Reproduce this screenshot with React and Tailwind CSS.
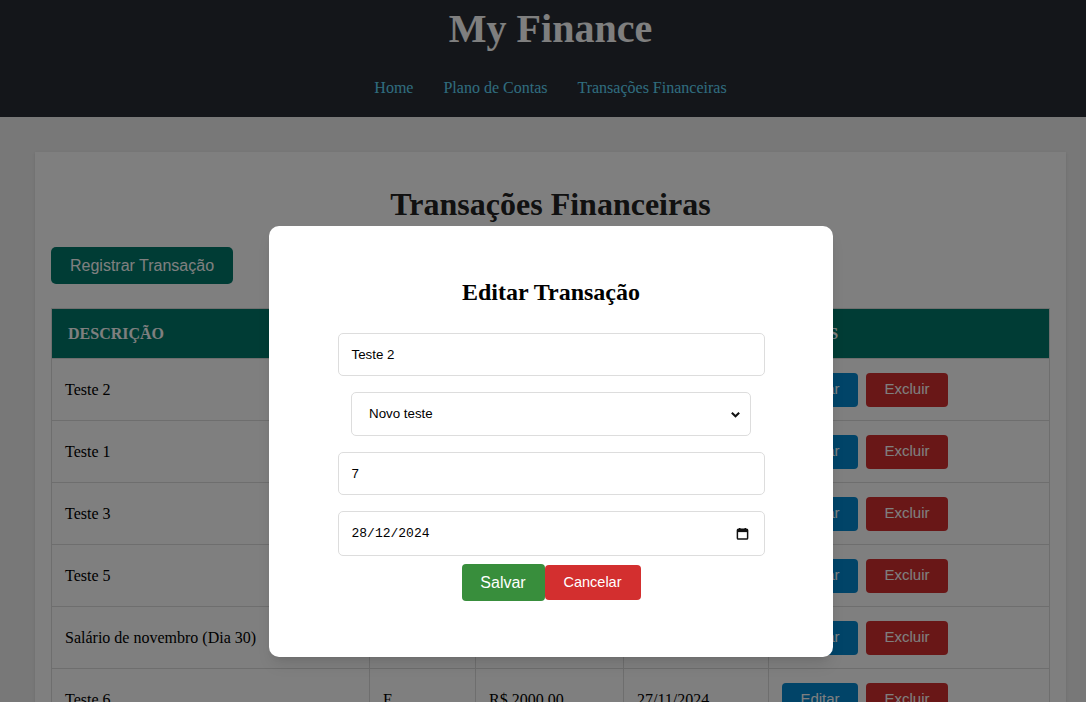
import { useState } from "react";

const rows = [
  { desc: "Teste 2", tipo: "S", valor: "R$ 7.00", data: "28/12/2024" },
  { desc: "Teste 1", tipo: "E", valor: "R$ 150.00", data: "15/12/2024" },
  { desc: "Teste 3", tipo: "S", valor: "R$ 45.00", data: "10/12/2024" },
  { desc: "Teste 5", tipo: "E", valor: "R$ 300.00", data: "05/12/2024" },
  { desc: "Salário de novembro (Dia 30)", tipo: "E", valor: "R$ 3500.00", data: "30/11/2024" },
  { desc: "Teste 6", tipo: "E", valor: "R$ 2000.00", data: "27/11/2024" },
];

function App() {
  const [descricao] = useState("Teste 2");

  return (
    <div className="w-full h-[702px] overflow-hidden">
      <div className="relative w-[1101px] h-[702px] bg-[#f0f0f0] font-['Liberation_Serif',serif]">
        {/* Header */}
        <header className="h-[117px] bg-[#282c34] flex flex-col items-center">
          <h1 className="mt-[6px] h-[46px] leading-[46px] text-[40px] font-bold text-white">
            My Finance
          </h1>
          <nav className="mt-[26px] flex gap-[30px] text-[16px] leading-[20px] text-[#61dafb]">
            <a>Home</a>
            <a>Plano de Contas</a>
            <a>Transações Financeiras</a>
          </nav>
        </header>

        {/* Conteúdo */}
        <main className="mt-[35px] mx-auto w-[1031px] bg-white shadow-sm px-[16px] pt-[33px] pb-10">
          <h1 className="text-center text-[32px] leading-[38px] font-bold text-[#222]">
            Transações Financeiras
          </h1>
          <button className="mt-[24px] h-[37px] px-[19px] rounded-[5px] bg-[#00796b] text-white text-[16px] font-['Liberation_Sans',sans-serif]">
            Registrar Transação
          </button>

          <table className="mt-[24px] w-[999px] border-collapse text-[16px] text-black">
            <thead>
              <tr className="h-[50px] bg-[#00796b] text-white text-left">
                <th className="w-[318px] px-[16px] font-bold border border-[#ddd]">DESCRIÇÃO</th>
                <th className="w-[106px] px-[16px] font-bold border border-[#ddd]">TIPO</th>
                <th className="w-[148px] px-[16px] font-bold border border-[#ddd]">VALOR</th>
                <th className="w-[145px] px-[16px] font-bold border border-[#ddd]">DATA</th>
                <th className="px-[14px] font-bold border border-[#ddd]">AÇÕES</th>
              </tr>
            </thead>
            <tbody>
              {rows.map((r, i) => (
                <tr key={i} className="h-[62px]">
                  <td className="px-[13px] border border-[#ddd]">{r.desc}</td>
                  <td className="px-[13px] border border-[#ddd]">{r.tipo}</td>
                  <td className="px-[13px] border border-[#ddd]">{r.valor}</td>
                  <td className="px-[13px] border border-[#ddd]">{r.data}</td>
                  <td className="px-[13px] border border-[#ddd]">
                    <div className="flex gap-[8px] font-['Liberation_Sans',sans-serif] text-[15px]">
                      <button className="w-[76px] h-[34px] rounded-[4px] bg-[#0288d1] text-white">Editar</button>
                      <button className="w-[82px] h-[34px] rounded-[4px] bg-[#d32f2f] text-white">Excluir</button>
                    </div>
                  </td>
                </tr>
              ))}
            </tbody>
          </table>
        </main>

        {/* Modal */}
        <div className="absolute inset-0 bg-black/50 flex justify-center pt-[226px] pl-[1px]">
          <div className="w-[564px] h-[431px] bg-white rounded-[10px] shadow-lg pt-[52px] flex flex-col items-center">
            <h2 className="text-[24px] leading-[28px] font-bold text-black">Editar Transação</h2>

            <div className="mt-[27px] w-[427px] h-[43px] border border-[#ddd] rounded-[5px] px-[13px] flex items-center font-['Liberation_Sans',sans-serif] text-[13.33px] text-black">
              {descricao}
            </div>

            <div className="mt-[16px] w-[400px] h-[44px] border border-[#ddd] rounded-[5px] pl-[17px] pr-[9px] flex items-center justify-between font-['Liberation_Sans',sans-serif] text-[13.33px] text-black">
              <span>Novo teste</span>
              <svg width="11" height="11" viewBox="0 0 12 12">
                <path d="M2 4 L6 8 L10 4" fill="none" stroke="#111" strokeWidth="2.2" />
              </svg>
            </div>

            <div className="mt-[16px] w-[427px] h-[43px] border border-[#ddd] rounded-[5px] px-[13px] flex items-center font-['Liberation_Sans',sans-serif] text-[13.33px] text-black">
              7
            </div>

            <div className="mt-[16px] w-[427px] h-[45px] border border-[#ddd] rounded-[5px] pl-[13px] pr-[15px] flex items-center justify-between font-['Liberation_Mono',monospace] text-[13px] text-black">
              <span>28/12/2024</span>
              <svg width="13" height="13" viewBox="0 0 14 14">
                <rect x="1.5" y="2.5" width="11" height="10.5" rx="1" fill="none" stroke="#111" strokeWidth="1.6" />
                <rect x="1.5" y="2.5" width="11" height="3" fill="#111" />
                <path d="M4 1 V3 M10 1 V3" stroke="#111" strokeWidth="1.6" />
              </svg>
            </div>

            <div className="mt-[8px] flex items-center font-['Liberation_Sans',sans-serif]">
              <button className="w-[83px] h-[37px] rounded-[4px] bg-[#388e3c] text-white text-[16px]">Salvar</button>
              <button className="w-[96px] h-[35px] rounded-[4px] bg-[#d32f2f] text-white text-[14.5px]">Cancelar</button>
            </div>
          </div>
        </div>
      </div>
    </div>
  );
}

export default App;
